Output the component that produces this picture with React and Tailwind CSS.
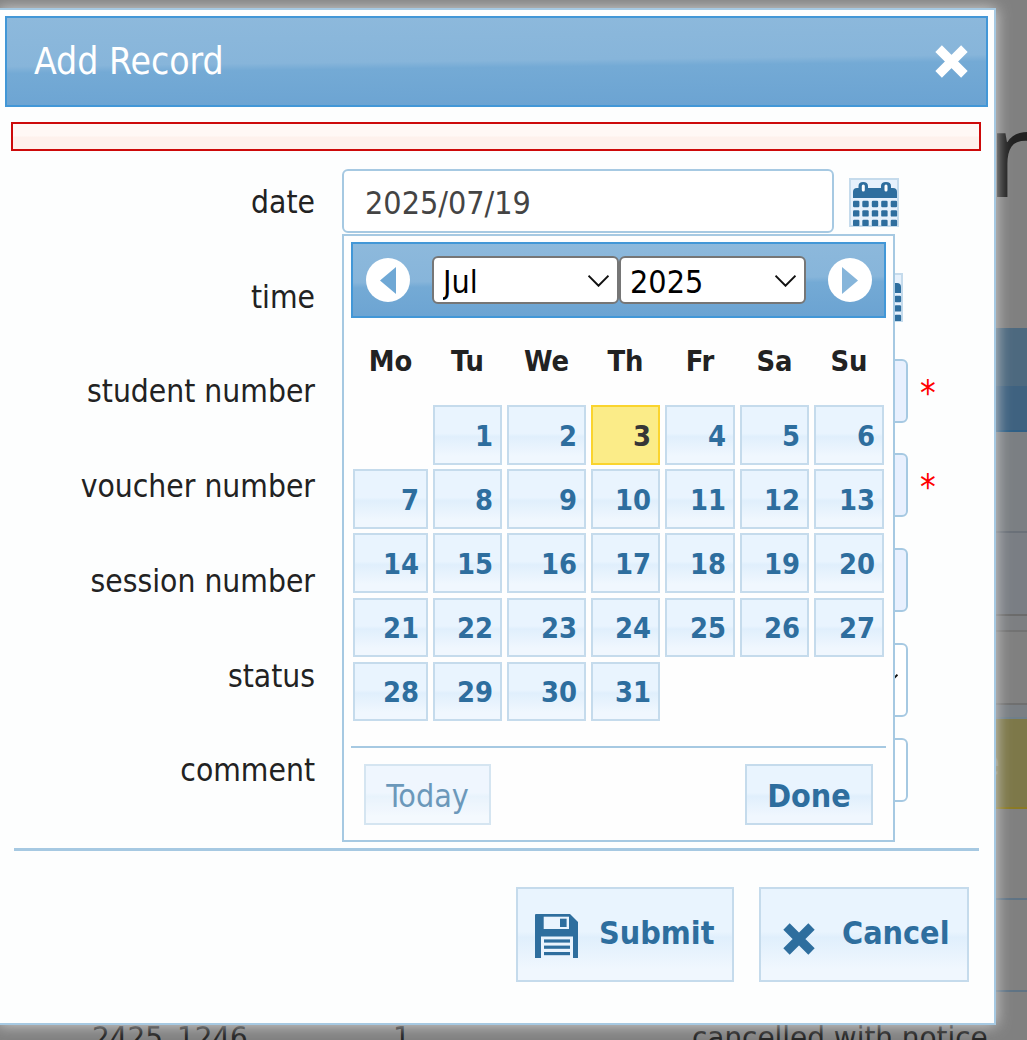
const GLASS = "bg-[linear-gradient(#e9f4fe_0%,#e9f4fe_47%,#e0effc_53%,#f0f7fe_88%)]";
const HEAD = "bg-[linear-gradient(179.3deg,#8db9dc_0%,#87b5da_49%,#74aad5_56%,#6ba3d2_100%)]";
const SANS = "font-['DejaVu_Sans',sans-serif] font-stretch-condensed";
const BOLD = "font-bold";

function Chevron({ className }) {
  return (
    <svg viewBox="0 0 21 12" className={"pointer-events-none absolute h-3 w-[21px] " + className} fill="none" stroke="#111" strokeWidth="2">
      <path d="M0.5 0.7 10.5 10.7 20.5 0.7" />
    </svg>
  );
}

function XIcon({ className, color }) {
  return (
    <svg viewBox="0 0 32 32" className={className}>
      <path d="M3.5 3.5 28.5 28.5M28.5 3.5 3.5 28.5" stroke={color} strokeWidth="9" fill="none" />
    </svg>
  );
}

function CalIcon({ className }) {
  const xs = [4, 13.3, 22.8, 32.2, 41.7];
  const ys = [22.8, 32.2, 41.7];
  return (
    <svg viewBox="0 0 50 49" className={className}>
      <rect x="1" y="1" width="48" height="47" fill="#e6f1fc" stroke="#c5dbec" strokeWidth="2" />
      <path d="M4 20V14Q4 10 8 10H9.5V8Q9.5 4 14.2 4T19 8V10H32V8Q32 4 37 4T42 8V10H44Q48 10 48 14V20Z" fill="#2e6e9e" />
      <rect x="12.8" y="6.5" width="3" height="7" rx="1.5" fill="#fff" />
      <rect x="35.5" y="6.5" width="3" height="7" rx="1.5" fill="#fff" />
      {ys.map((y) => xs.map((x) => <rect key={x + "-" + y} x={x} y={y} width="6.4" height="6.4" rx="1.2" fill="#2e6e9e" />))}
    </svg>
  );
}

function Save({ className }) {
  return (
    <svg viewBox="0 0 43 44" className={className}>
      <path d="M0 1Q0 0 1 0H35L43 8V44H0Z" fill="#2e6e9e" />
      <rect x="8.7" y="2.7" width="25.3" height="12.3" fill="#eaf4fe" />
      <rect x="25" y="4.7" width="6.6" height="8.3" fill="#2e6e9e" />
      <rect x="6" y="22.5" width="32" height="21.5" fill="#eaf4fe" />
      <rect x="9" y="25.4" width="26" height="3.2" fill="#2e6e9e" />
      <rect x="9" y="31.6" width="26" height="3.2" fill="#2e6e9e" />
      <rect x="9" y="38" width="26" height="3.2" fill="#2e6e9e" />
    </svg>
  );
}

function Row({ label, children }) {
  return (
    <div className="flex h-[94.75px] items-start">
      <label className="flex h-16 w-[315px] items-center justify-end pt-[3px] text-[31.5px] text-[#222]">{label}</label>
      <div className="ml-[27px] flex items-start">{children}</div>
    </div>
  );
}

const INPUT = "h-16 rounded-[6px] border-2 border-[#a6c9e2] px-[21px] pt-[3px] text-[32px] text-[#444] outline-none " + SANS;

function MonthSelect({ value }) {
  return (
    <div className="relative h-12 w-[187px]">
      <select defaultValue={value} className={"h-12 w-[187px] appearance-none rounded-[6px] border-2 border-[#767676] bg-white pl-[9px] text-[32px] text-black outline-none " + SANS}>
        <option>{value}</option>
      </select>
      <Chevron className="top-[19px] right-[10px]" />
    </div>
  );
}

function Arrow({ dir }) {
  return (
    <div className="flex h-11 w-11 items-center justify-center rounded-full bg-white">
      <svg viewBox="0 0 16 27" className="h-[27px] w-4">
        <path d={dir === "l" ? "M16 0V27L0 13.5Z" : "M0 0V27L16 13.5Z"} fill={dir === "l" ? "#6fa8d5" : "#86b5da"} />
      </svg>
    </div>
  );
}

function Day({ d }) {
  const today = d === 3;
  return (
    <div
      className={
        "flex items-center justify-end border-2 pt-[3px] pr-[7px] text-[28.8px] " +
        BOLD +
        (today ? " border-[#fad42e] bg-[#fbec88] text-[#363636]" : " border-[#c5dbec] text-[#2e6e9e] " + GLASS)
      }
    >
      {d}
    </div>
  );
}

const COLS = "grid-cols-[75px_69px_79px_69px_70px_69px_70px]";

function Calendar() {
  const days = Array.from({ length: 31 }, (_, i) => i + 1);
  return (
    <div className="absolute top-[224px] left-[342px] h-[608px] w-[553px] border-2 border-[#a6c9e2] bg-[#fefefe] px-[7px] pt-[6px]">
      <div className={"flex h-[76px] w-[535px] items-center border-2 border-[#4297d7] pl-[13px] " + HEAD}>
        <Arrow dir="l" />
        <div className="ml-[22px]"><MonthSelect value="Jul" /></div>
        <MonthSelect value="2025" />
        <div className="ml-[22px]"><Arrow dir="r" /></div>
      </div>
      <div className={"ml-[2px] grid h-[87px] items-center gap-x-[5px] text-center text-[28.8px] text-[#222] " + COLS + " " + BOLD}>
        {["Mo", "Tu", "We", "Th", "Fr", "Sa", "Su"].map((w) => <span key={w}>{w}</span>)}
      </div>
      <div className={"ml-[2px] grid auto-rows-[59.5px] gap-x-[5px] gap-y-[4.7px] " + COLS}>
        <div />
        {days.map((d) => <Day key={d} d={d} />)}
      </div>
      <div className="mt-[25px] h-[2px] w-[535px] bg-[#a6c9e2]" />
      <div className="mt-4 flex w-[535px] justify-between px-[13px]">
        <button className={"h-[61px] w-[127px] border-2 border-[#c5dbec] pt-[3px] text-[32px] text-[#2e6e9e] opacity-70 " + GLASS}>Today</button>
        <button className={"h-[61px] w-[128px] border-2 border-[#c5dbec] pt-[3px] text-[32px] text-[#2e6e9e] " + GLASS + " " + BOLD}>Done</button>
      </div>
    </div>
  );
}

function Background() {
  return (
    <div className="text-[#222]">
      <div className="h-[328px] overflow-hidden pl-[987px] pt-[72px] font-['Noto_Sans',sans-serif] text-[118px] leading-[160px]">n</div>
      <div className="h-[104px] border-b-2 border-[#2f5f85] bg-[linear-gradient(#4d697f_0%,#4d697f_57%,#3f6280_57%,#3f6280_100%)]" />
      <div className="h-[101px] border-b-2 border-[#6a7078] bg-[#7b7f83]" />
      <div className="h-[83px] border-b-2 border-[#6b6b6b] bg-[#7a7e84]" />
      <div className="h-[14px] bg-[#7d7f82]" />
      <div className="h-[73px] border-t-2 border-[#727272] bg-[#808080]" />
      <div className="h-[14px] border-t-2 border-[#6f6f6f] bg-[#7a7f84]" />
      <div className="h-[92px] border-y-2 border-t-[#6f7f8a] border-b-[#8a7a25] bg-[#7d7849] pl-[980px] text-[36px] leading-[88px] text-[#8b8b74]">e</div>
      <div className="h-[91px] border-b-2 border-[#5f7384] bg-[#808080]" />
      <div className="h-[92px] border-b-2 border-[#5f7384] bg-[#808080]" />
      <div className="grid grid-cols-[301px_299px_400px] pl-[92px] pt-[25px] text-[31px] leading-[40px] whitespace-nowrap">
        <span>2425_1246</span>
        <span>1</span>
        <span>cancelled with notice</span>
      </div>
    </div>
  );
}

export default function App() {
  return (
    <div className={"relative h-[1040px] w-[1027px] overflow-hidden bg-[#808080] " + SANS}>
      <Background />
      <div className="absolute top-2 -left-[2px] h-[1017px] w-[998px] border-2 border-[#a6c9e2] bg-[#fdfefe] shadow-[0_0_14px_#d4d4d4]">
        <div className={"mt-[6px] ml-[5px] flex h-[91px] w-[983px] items-center justify-between border-2 border-[#4297d7] pr-[18px] pl-[27px] " + HEAD}>
          <span className="text-[37px] text-white">Add Record</span>
          <XIcon className="h-[33px] w-[33px]" color="#fff" />
        </div>
        <div className="mt-[15px] ml-[11px] h-[29px] w-[970px] border-2 border-[#cd0a0a] bg-[linear-gradient(#fff8f5_0%,#fff8f5_48%,#fef1ec_52%,#fef1ec_100%)]" />
        <div className="mt-[18px]">
          <Row label="date">
            <input defaultValue="2025/07/19" className={INPUT + " w-[492px] bg-white"} />
            <CalIcon className="mt-[9px] ml-[15px] h-[49px] w-[50px]" />
          </Row>
          <Row label="time">
            <input className={INPUT + " w-[496px] bg-white"} />
            <CalIcon className="mt-[9px] ml-[15px] h-[49px] w-[50px]" />
          </Row>
          <Row label="student number">
            <input className={INPUT + " w-[566px] bg-[#e8f0fe]"} />
            <span className="mt-[8px] ml-[12px] text-[35px] text-[#f00]">*</span>
          </Row>
          <Row label="voucher number">
            <input className={INPUT + " w-[566px] bg-[#e8f0fe]"} />
            <span className="mt-[8px] ml-[12px] text-[35px] text-[#f00]">*</span>
          </Row>
          <Row label="session number">
            <input className={INPUT + " w-[566px] bg-[#e8f0fe]"} />
          </Row>
          <Row label="status">
            <div className="relative h-[74px] w-[566px]">
              <select className="h-[74px] w-[566px] appearance-none rounded-[6px] border-2 border-[#a6c9e2] bg-white outline-none" />
              <Chevron className="top-[31px] right-[10px]" />
            </div>
          </Row>
          <Row label="comment">
            <textarea className={INPUT + " w-[566px] resize-none bg-white"} />
          </Row>
        </div>
        <div className="mt-4 ml-[14px] h-[3px] w-[965px] bg-[#a6c9e2]" />
        <div className="mt-[36px] flex justify-end gap-[25px] pr-[25px]">
          <button className={"flex h-[95px] w-[218px] items-center gap-[21px] border-2 border-[#c5dbec] pl-[17px] text-[32px] text-[#2e6e9e] " + GLASS + " " + BOLD}>
            <Save className="mt-[2px] h-[44px] w-[43px]" />
            <span className="-mt-[3px]">Submit</span>
          </button>
          <button className={"flex h-[95px] w-[210px] items-center gap-[27px] border-2 border-[#c5dbec] pl-[22px] text-[32px] text-[#2e6e9e] " + GLASS + " " + BOLD}>
            <XIcon className="mt-[9px] h-8 w-8" color="#2e6e9e" />
            <span className="-mt-[3px]">Cancel</span>
          </button>
        </div>
        <Calendar />
      </div>
    </div>
  );
}
